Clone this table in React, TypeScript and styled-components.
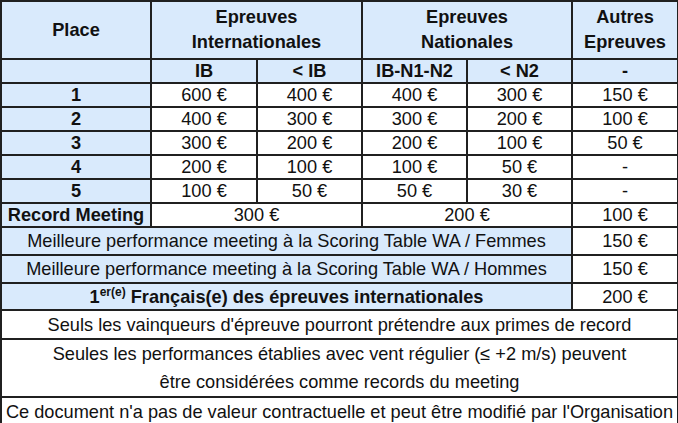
import React from "react";
import styled, { createGlobalStyle } from "styled-components";

const GlobalStyle = createGlobalStyle`
  html, body {
    margin: 0;
    padding: 0;
    background: #ffffff;
  }
  body {
    font-family: "Liberation Sans", Arial, sans-serif;
    color: #111111;
  }
`;

const BLUE = "#d9eafc";
const LINE = "2px solid #202020";

const Table = styled.table`
  width: 677px;
  table-layout: fixed;
  border-collapse: collapse;
  font-size: 18.2px;
  line-height: 22px;
`;

const Row = styled.tr<{ $h: number }>`
  height: ${(p) => p.$h}px;
`;

const Cell = styled.td<{ $blue?: boolean; $bold?: boolean }>`
  border: ${LINE};
  padding: 0;
  text-align: center;
  vertical-align: middle;
  white-space: nowrap;
  overflow: hidden;
  background: ${(p) => (p.$blue ? BLUE : "#ffffff")};
  font-weight: ${(p) => (p.$bold ? 700 : 400)};
`;

const HeadLines = styled.div`
  line-height: 25px;
`;

const NoteLines = styled.div`
  line-height: 28px;
`;

const Sup = styled.sup`
  font-size: 12px;
  line-height: 0;
  vertical-align: 7px;
`;

const places: [string, string[]][] = [
  ["1", ["600 €", "400 €", "400 €", "300 €", "150 €"]],
  ["2", ["400 €", "300 €", "300 €", "200 €", "100 €"]],
  ["3", ["300 €", "200 €", "200 €", "100 €", "50 €"]],
  ["4", ["200 €", "100 €", "100 €", "50 €", "-"]],
  ["5", ["100 €", "50 €", "50 €", "30 €", "-"]],
];
const placeHeights = [24, 23, 24, 24, 24];

export default function App() {
  return (
    <>
      <GlobalStyle />
      <Table>
        <colgroup>
          <col style={{ width: 150 }} />
          <col style={{ width: 106 }} />
          <col style={{ width: 105 }} />
          <col style={{ width: 105 }} />
          <col style={{ width: 105 }} />
          <col style={{ width: 106 }} />
        </colgroup>
        <tbody>
          <Row $h={58}>
            <Cell $blue $bold>Place</Cell>
            <Cell $blue $bold colSpan={2}>
              <HeadLines>Epreuves<br />Internationales</HeadLines>
            </Cell>
            <Cell $blue $bold colSpan={2}>
              <HeadLines>Epreuves<br />Nationales</HeadLines>
            </Cell>
            <Cell $blue $bold>
              <HeadLines>Autres<br />Epreuves</HeadLines>
            </Cell>
          </Row>
          <Row $h={24}>
            <Cell $blue />
            <Cell $blue $bold>IB</Cell>
            <Cell $blue $bold>&lt; IB</Cell>
            <Cell $blue $bold>IB-N1-N2</Cell>
            <Cell $blue $bold>&lt; N2</Cell>
            <Cell $blue $bold>-</Cell>
          </Row>
          {places.map(([place, values], i) => (
            <Row $h={placeHeights[i]} key={place}>
              <Cell $blue $bold>{place}</Cell>
              {values.map((v, j) => (
                <Cell key={j}>{v}</Cell>
              ))}
            </Row>
          ))}
          <Row $h={24}>
            <Cell $blue $bold>Record Meeting</Cell>
            <Cell colSpan={2}>300 €</Cell>
            <Cell colSpan={2}>200 €</Cell>
            <Cell>100 €</Cell>
          </Row>
          <Row $h={28}>
            <Cell $blue colSpan={5}>
              Meilleure performance meeting à la Scoring Table WA / Femmes
            </Cell>
            <Cell>150 €</Cell>
          </Row>
          <Row $h={28}>
            <Cell $blue colSpan={5}>
              Meilleure performance meeting à la Scoring Table WA / Hommes
            </Cell>
            <Cell>150 €</Cell>
          </Row>
          <Row $h={27}>
            <Cell $blue $bold colSpan={5}>
              1<Sup>er(e)</Sup> Français(e) des épreuves internationales
            </Cell>
            <Cell>200 €</Cell>
          </Row>
          <Row $h={29}>
            <Cell colSpan={6}>
              Seuls les vainqueurs d'épreuve pourront prétendre aux primes de record
            </Cell>
          </Row>
          <Row $h={56}>
            <Cell colSpan={6}>
              <NoteLines>
                Seules les performances établies avec vent régulier (≤ +2 m/s) peuvent
                <br />
                être considérées comme records du meeting
              </NoteLines>
            </Cell>
          </Row>
          <Row $h={29}>
            <Cell colSpan={6}>
              Ce document n'a pas de valeur contractuelle et peut être modifié par l'Organisation
            </Cell>
          </Row>
        </tbody>
      </Table>
    </>
  );
}
